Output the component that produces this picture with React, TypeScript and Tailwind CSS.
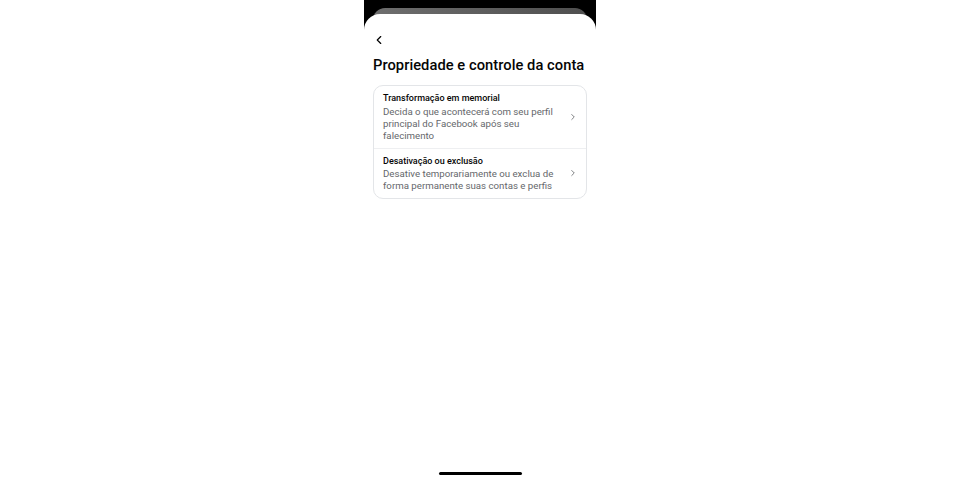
import { ChevronLeft, ChevronRight } from 'lucide-react'

const ITEMS = [
  {
    title: 'Transformação em memorial',
    description: 'Decida o que acontecerá com seu perfil principal do Facebook após seu falecimento',
  },
  {
    title: 'Desativação ou exclusão',
    description: 'Desative temporariamente ou exclua de forma permanente suas contas e perfis',
  },
]

function App() {
  return (
    <div className="w-full h-[480px] bg-white flex justify-center overflow-hidden font-['Roboto',sans-serif]">
      <div className="w-[232px] h-full bg-black flex flex-col">
        {/* sheet behind */}
        <div className="pt-[8px] px-[9px]">
          <div className="h-[14px] rounded-t-[12px] bg-gradient-to-r from-[#6e6e6e] to-[#4f4f4f]" />
        </div>

        {/* Current sheet */}
        <div className="-mt-[8px] flex-1 bg-white rounded-t-[16px] px-[9px] flex flex-col">
          <div className="h-[20px] mt-[16px] flex items-center">
            <ChevronLeft className="w-[14px] h-[14px] -ml-[1px] text-black" strokeWidth={2} />
          </div>
          <h1 className="mt-[5px] text-[14.7px] leading-[20px] font-medium text-[#050505] tracking-[0.05px] whitespace-nowrap">
            Propriedade e controle da conta
          </h1>

          <div className="mt-[10px] w-[214px] border border-[#e3e5e8] rounded-[10px]">
            {ITEMS.map((item, i) => (
              <div
                key={item.title}
                className={`flex items-center pl-[9px] pr-[9px] pt-[6px] pb-[6px] ${i === 0 ? 'border-b border-[#eeeff1]' : ''}`}
              >
                <div className="flex-1">
                  <p className="text-[9px] leading-[13.5px] font-medium text-[#050505]">{item.title}</p>
                  <p className="text-[9.7px] leading-[12px] text-[#65676b]">{item.description}</p>
                </div>
                <ChevronRight className="w-[10px] h-[10px] ml-[5px] -mr-[1px] text-[#65676b]" strokeWidth={2} />
              </div>
            ))}
          </div>

          <div className="flex-1" />
          <div className="flex justify-center pb-[5px]">
            <div className="w-[83px] h-[3px] rounded-full bg-black" />
          </div>
        </div>
      </div>
    </div>
  )
}

export default App
